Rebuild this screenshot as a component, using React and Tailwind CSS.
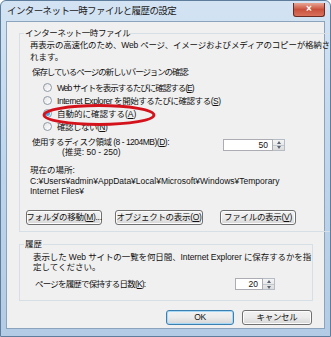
import React from "react";

const Key = ({ children }) => <span className="underline">{children}</span>;

const Radio = ({ checked, track = "", children }) => (
  <div className="flex h-[13px] items-center pl-[13px]">
    <span className="flex h-[9px] w-[9px] items-center justify-center rounded-full border border-[#8e9aa6] bg-gradient-to-br from-[#e4e4e4] to-[#ffffff]">
      {checked ? (
        <span className="h-[5px] w-[5px] rounded-full bg-gradient-to-br from-[#1f8ad8] to-[#5fb4f0]" />
      ) : null}
    </span>
    <span className={`ml-[5px] ${track}`}>{children}</span>
  </div>
);

const Spinner = ({ value, inputW }) => (
  <div className="flex h-[12px]">
    <div
      className={`${inputW} flex items-center justify-end border border-[#abadb3] bg-white pr-[4px] leading-none`}
    >
      {value}
    </div>
    <div className="flex w-[12px] flex-col border border-l-0 border-[#b6bcc6] bg-gradient-to-b from-[#f4f4f4] to-[#dcdcdc]">
      <div className="flex flex-1 items-center justify-center border-b border-[#c2c8cf]">
        <span className="h-0 w-0 border-x-[2.5px] border-b-[3px] border-x-transparent border-b-[#5a6472]" />
      </div>
      <div className="flex flex-1 items-center justify-center">
        <span className="h-0 w-0 border-x-[2.5px] border-t-[3px] border-x-transparent border-t-[#5a6472]" />
      </div>
    </div>
  </div>
);

const Button = ({ w, primary, children }) => (
  <div
    className={`${w} flex h-[15px] items-center justify-center rounded-[3px] border ${
      primary
        ? "border-[#3c7fb1] shadow-[inset_0_0_0_1px_#a7d8f5]"
        : "border-[#707070] shadow-[inset_0_0_0_1px_#fcfcfc]"
    } bg-gradient-to-b from-[#f2f2f2] via-[#ebebeb] to-[#d6d6d6] leading-none tracking-[-0.3px]`}
  >
    {children}
  </div>
);

export default function App() {
  return (
    <div className="relative h-[337px] w-[331px] overflow-hidden whitespace-nowrap rounded-t-[6px] border border-[#5e7d9c] bg-gradient-to-b from-[#d3e3f3] via-[#bed5ec] to-[#b3cbe4] font-['Liberation_Sans','Noto_Sans_CJK_JP',sans-serif] text-[8.5px] text-[#111]">
      {/* title bar */}
      <div className="flex h-[20px] items-center justify-between">
        <div className="pl-[6px] text-[9.5px] leading-none tracking-[-0.6px] text-[#1b1b1b]">
          インターネット一時ファイルと履歴の設定
        </div>
        <div className="mr-[5px] mt-[-3px] flex h-[14px] w-[32px] items-center justify-center rounded-b-[3px] border border-t-0 border-[#6b2a22] bg-gradient-to-b from-[#e8a493] via-[#c9513c] to-[#d8715c] text-[10px] font-bold leading-none text-white">
          ×
        </div>
      </div>

      {/* client */}
      <div className="mx-[5px] h-[308px] border border-[#8ca3bd] bg-[#f0f0f0] pl-[12px] pr-[11px] pt-[5px]">
        <fieldset className="border border-[#d5dfe5] pb-[6px]">
          <legend className="ml-[4px] px-[1px] leading-[12px] tracking-[-0.4px]">
            インターネット一時ファイル
          </legend>
          <div className="pl-[10px] leading-[12px]">
            <div className="tracking-[-0.2px]">
              再表示の高速化のため、Web ページ、イメージおよびメディアのコピーが格納さ
            </div>
            <div>れます。</div>
            <div className="mt-[3px] pl-[2px] tracking-[-1.1px]">
              保存しているページの新しいバージョンの確認:
            </div>
            <div className="mt-[3px]">
              <Radio track="tracking-[-1px]">
                Web サイトを表示するたびに確認する(<Key>E</Key>)
              </Radio>
              <Radio track="tracking-[-0.45px]">
                Internet Explorer を開始するたびに確認する(<Key>S</Key>)
              </Radio>
              <Radio checked>
                自動的に確認する(<Key>A</Key>)
              </Radio>
              <Radio track="tracking-[-0.5px]">
                確認しない(<Key>N</Key>)
              </Radio>
            </div>
            <div className="mt-[4px] flex">
              <div className="w-[193px] pl-[2px] leading-[10px]">
                <div className="tracking-[-0.5px]">
                  使用するディスク領域 (8 - 1204MB)(<Key>D</Key>):
                </div>
                <div className="pl-[30px]">(推奨: 50 - 250)</div>
              </div>
              <div className="mt-[2px]">
                <Spinner value="50" inputW="w-[50px]" />
              </div>
            </div>
            <div className="mt-[7px]">現在の場所:</div>
            <div className="leading-[10px]">
              <div>C:¥Users¥admin¥AppData¥Local¥Microsoft¥Windows¥Temporary</div>
              <div>Internet Files¥</div>
            </div>
            <div className="ml-[-4px] mt-[14px] flex">
              <Button w="w-[76px]">
                フォルダの移動(<Key>M</Key>)...
              </Button>
              <div className="ml-[13px]">
                <Button w="w-[88px]">
                  オブジェクトの表示(<Key>O</Key>)
                </Button>
              </div>
              <div className="ml-[17px]">
                <Button w="w-[76px]">
                  ファイルの表示(<Key>V</Key>)
                </Button>
              </div>
            </div>
          </div>
        </fieldset>

        <fieldset className="mt-[6px] border border-[#d5dfe5] pb-[9px]">
          <legend className="ml-[4px] px-[1px] leading-[12px]">履歴</legend>
          <div className="mt-[2px] pl-[13px]">
            <div className="leading-[10px]">
              <div className="tracking-[-0.1px]">
                表示した Web サイトの一覧を何日間、Internet Explorer に保存するかを指
              </div>
              <div>定してください。</div>
            </div>
            <div className="mt-[6px] flex items-center">
              <div className="w-[202px] pl-[2px] tracking-[-0.8px]">
                ページを履歴で保持する日数(<Key>K</Key>):
              </div>
              <Spinner value="20" inputW="w-[28px]" />
            </div>
          </div>
        </fieldset>

        <div className="mt-[9px] flex justify-end gap-[8px] pr-[1px]">
          <Button w="w-[68px]" primary>
            OK
          </Button>
          <Button w="w-[70px]">キャンセル</Button>
        </div>
      </div>

      {/* red annotation ellipse */}
      <svg
        className="pointer-events-none absolute left-[39px] top-[101px]"
        width="118"
        height="26"
        viewBox="0 0 118 26"
      >
        <ellipse
          cx="59"
          cy="13"
          rx="55"
          ry="9.5"
          fill="none"
          stroke="#d3121c"
          strokeWidth="2.8"
        />
      </svg>
    </div>
  );
}
